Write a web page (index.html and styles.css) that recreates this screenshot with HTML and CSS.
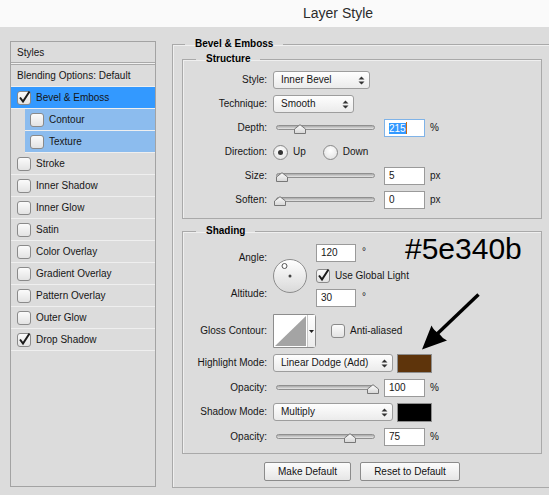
FILE: index.html
```html
<!doctype html>
<html>
<head>
<meta charset="utf-8">
<title>Layer Style</title>
<link rel="stylesheet" href="styles.css">
</head>

<body>
<div class="dialog">
	<div class="titlebar">Layer Style</div>
	<div class="main">
		<div class="styles_list">
			<div class="list_head">Styles</div>
			<div class="list_sep"></div>
			<div class="list_row">Blending Options: Default</div>
			<div class="list_row on"><span class="chk"><svg viewBox="0 0 12 12"><path d="M2 5.5L5 9.5L11.5-0.5"/></svg></span>Bevel &amp; Emboss</div>
			<div class="list_row sub"><span class="chk"></span>Contour</div>
			<div class="list_row sub"><span class="chk"></span>Texture</div>
			<div class="list_row"><span class="chk"></span>Stroke</div>
			<div class="list_row"><span class="chk"></span>Inner Shadow</div>
			<div class="list_row"><span class="chk"></span>Inner Glow</div>
			<div class="list_row"><span class="chk"></span>Satin</div>
			<div class="list_row"><span class="chk"></span>Color Overlay</div>
			<div class="list_row"><span class="chk"></span>Gradient Overlay</div>
			<div class="list_row"><span class="chk"></span>Pattern Overlay</div>
			<div class="list_row"><span class="chk"></span>Outer Glow</div>
			<div class="list_row"><span class="chk"><svg viewBox="0 0 12 12"><path d="M2 5.5L5 9.5L11.5-0.5"/></svg></span>Drop Shadow</div>
		</div>

		<fieldset class="group main_group">
			<legend>Bevel &amp; Emboss</legend>

			<fieldset class="group structure">
				<legend>Structure</legend>
				<div class="frow">
					<span class="lbl">Style:</span>
					<div class="select w96">Inner Bevel<svg class="updown" viewBox="0 0 7 9"><path d="M0.5 3.5L3.5 0.5L6.5 3.5Z M0.5 5.5L3.5 8.5L6.5 5.5Z"/></svg></div>
				</div>
				<div class="frow">
					<span class="lbl">Technique:</span>
					<div class="select w80">Smooth<svg class="updown" viewBox="0 0 7 9"><path d="M0.5 3.5L3.5 0.5L6.5 3.5Z M0.5 5.5L3.5 8.5L6.5 5.5Z"/></svg></div>
				</div>
				<div class="frow">
					<span class="lbl">Depth:</span>
					<div class="slider"><div class="track"></div><div class="rail"><span class="thumb" style="left:21.5%"></span></div></div>
					<span class="field focus"><span class="sel">215</span><span class="caret"></span></span>
					<span class="unit">%</span>
				</div>
				<div class="frow">
					<span class="lbl">Direction:</span>
					<span class="radio on"></span><span class="radio_txt">Up</span>
					<span class="radio"></span><span class="radio_txt">Down</span>
				</div>
				<div class="frow">
					<span class="lbl">Size:</span>
					<div class="slider"><div class="track"></div><div class="rail"><span class="thumb" style="left:2%"></span></div></div>
					<span class="field">5</span>
					<span class="unit">px</span>
				</div>
				<div class="frow">
					<span class="lbl">Soften:</span>
					<div class="slider"><div class="track"></div><div class="rail"><span class="thumb" style="left:0%"></span></div></div>
					<span class="field">0</span>
					<span class="unit">px</span>
				</div>
			</fieldset>

			<fieldset class="group shading">
				<legend>Shading</legend>
				<div class="angle_block">
					<div class="angle_labels">
						<div class="lbl_angle">Angle:</div>
						<div class="lbl_alt">Altitude:</div>
					</div>
					<svg class="dial" width="34" height="34" viewBox="0 0 34 34">
						<defs><linearGradient id="dialg" x1="0" y1="0" x2="0" y2="1"><stop offset="0" stop-color="#ffffff"/><stop offset="1" stop-color="#d9d9d9"/></linearGradient></defs>
						<circle cx="17" cy="17" r="16.5" fill="url(#dialg)" stroke="#8c8c8c"/>
						<circle cx="11.5" cy="7" r="2.5" fill="#fff" stroke="#555"/>
						<circle cx="17" cy="17" r="1.5" fill="#444"/>
					</svg>
					<div class="angle_fields">
						<div class="frow_s"><span class="field w40">120</span><span class="deg">°</span></div>
						<div class="chk_row"><span class="chk"><svg viewBox="0 0 12 12"><path d="M2 5.5L5 9.5L11.5-0.5"/></svg></span>Use Global Light</div>
						<div class="frow_s"><span class="field w40">30</span><span class="deg">°</span></div>
					</div>
				</div>

				<div class="contour_row">
					<span class="lbl">Gloss Contour:</span>
					<div class="contour">
						<svg class="contour_pic" width="33" height="32" viewBox="0 0 33 32"><polygon points="1,31 32,1 32,31" fill="#a4a4a4"/></svg>
						<span class="contour_drop"><svg width="5" height="3" viewBox="0 0 5 3"><path d="M0 0H5L2.5 3Z" fill="#222"/></svg></span>
					</div>
					<span class="chk aa"></span>Anti-aliased
				</div>

				<div class="srow">
					<span class="lbl">Highlight Mode:</span>
					<div class="select w119">Linear Dodge (Add)<svg class="updown" viewBox="0 0 7 9"><path d="M0.5 3.5L3.5 0.5L6.5 3.5Z M0.5 5.5L3.5 8.5L6.5 5.5Z"/></svg></div>
					<span class="swatch" style="background:#5e340b"></span>
				</div>
				<div class="srow">
					<span class="lbl">Opacity:</span>
					<div class="slider"><div class="track"></div><div class="rail"><span class="thumb" style="left:100%"></span></div></div>
					<span class="field">100</span>
					<span class="unit">%</span>
				</div>
				<div class="srow">
					<span class="lbl">Shadow Mode:</span>
					<div class="select w119">Multiply<svg class="updown" viewBox="0 0 7 9"><path d="M0.5 3.5L3.5 0.5L6.5 3.5Z M0.5 5.5L3.5 8.5L6.5 5.5Z"/></svg></div>
					<span class="swatch" style="background:#000000"></span>
				</div>
				<div class="srow">
					<span class="lbl">Opacity:</span>
					<div class="slider"><div class="track"></div><div class="rail"><span class="thumb" style="left:75%"></span></div></div>
					<span class="field">75</span>
					<span class="unit">%</span>
				</div>
			</fieldset>

			<div class="buttons">
				<button class="btn b_make">Make Default</button>
				<button class="btn b_reset">Reset to Default</button>
			</div>
		</fieldset>
	</div>

	<!-- annotation over the dialog -->
	<div class="hex_note">#5e340b</div>
	<svg class="arrow" width="549" height="495" viewBox="0 0 549 495">
		<line x1="478.5" y1="294.5" x2="436" y2="335" stroke="#000" stroke-width="3.4"/>
		<path d="M422 349.5L431.5 325.5Q434 331 439 333.5Q442 338 447 340.5Z" fill="#000"/>
	</svg>
</div>
</body>
</html>
```

FILE: styles.css
```css
*{ padding:0; margin:0;}
html,body{ width:549px; height:495px; overflow:hidden;}
body{ background-color:#dcdcdc; font:10px/12px "Liberation Sans", Arial, sans-serif; color:#161616;}
.dialog{ position:relative; width:549px; height:495px; overflow:hidden;}

.titlebar{ height:27px; line-height:27px; padding-left:303px; background-color:#fafafa; font-size:14px; color:#2b2b2b;}
.main{ display:flex; align-items:flex-start;}

/* left list */
.styles_list{ margin:14px 0 0 10px; width:146px; height:446px; box-sizing:border-box; border:1px solid #a3a3a3; flex:none;}
.list_head{ height:20px; line-height:21px; padding-left:6px;}
.list_sep{ height:1px; background-color:#f1f1f1; border-top:1px solid #a9a9a9; border-bottom:1px solid #a9a9a9;}
.list_row{ display:flex; align-items:center; height:21px; padding-left:6px; border-bottom:1px solid #efefef;}
.list_row.on{ background-color:#3399ff;}
.list_row.sub{ margin-left:14px; padding-left:5px; background-color:#8cbcee;}

.chk{ width:14px; height:14px; box-sizing:border-box; border:1px solid #8a8a8a; border-radius:3px; background:linear-gradient(#fbfbfb,#e3e3e3); margin-right:5px; flex:none;}
.chk svg{ display:block; width:12px; height:12px; overflow:visible;}
.chk path{ fill:none; stroke:#1c1c1c; stroke-width:2;}

/* group boxes */
fieldset.group{ border:1px solid #a9a9a9; min-width:0; box-shadow:inset 1px 1px 0 #efefef;}
fieldset.group legend{ padding:0 10px; margin-left:13px; font-weight:bold; line-height:12px; color:#000;}
.main_group{ margin:11px 0 0 16px; width:400px; padding:3px 0 6px 9px; flex:none;}
.main_group > legend{ margin-left:3px !important;}
.structure{ width:360px; box-sizing:border-box; padding:3px 0 6px 0;}
.shading{ width:360px; box-sizing:border-box; margin-top:6px; padding:4px 0 4px 0;}

.frow{ display:flex; align-items:center; height:24px;}
.srow{ display:flex; align-items:center; height:24.5px;}
.lbl{ width:84px; margin-right:6px; text-align:right; flex:none;}

.select{ display:flex; align-items:center; justify-content:space-between; height:18px; box-sizing:border-box; border:1px solid #9d9d9d; border-radius:3px; background:linear-gradient(#fefefe,#ebebeb); padding:0 4px 0 7px; flex:none;}
.w96{ width:97px;}
.w80{ width:81px;}
.w119{ width:120px;}
.updown{ width:7px; height:9px; fill:#333;}

.field{ display:flex; align-items:center; width:41px; height:18px; box-sizing:border-box; border:1px solid #9a9a9a; background-color:#fff; padding-left:4px; margin-left:9px; flex:none;}
.field.w40{ width:40px; margin-left:0;}
.field.focus{ border-color:#7fb3e8;}
.sel{ background-color:#3399ff; color:#fff; line-height:11px;}
.caret{ width:1px; height:12px; background-color:#c86a10;}
.unit{ margin-left:5px;}

.slider{ width:99px; margin:3px 0 0 3px; flex:none;}
.track{ height:5px; box-sizing:border-box; border:1px solid #8f8f8f; border-radius:3px; background:linear-gradient(#a9a9a9,#e6e6e6);}
.rail{ position:relative; height:10px; margin:-6px 4px 0 2px;}
.thumb{ position:absolute; top:0; width:12px; height:10px; margin-left:-4px; background:url("data:image/svg+xml,%3Csvg xmlns='http://www.w3.org/2000/svg' width='12' height='10'%3E%3Cdefs%3E%3ClinearGradient id='g' x1='0' y1='0' x2='0' y2='1'%3E%3Cstop offset='0' stop-color='%23fdfdfd'/%3E%3Cstop offset='1' stop-color='%23d6d6d6'/%3E%3C/linearGradient%3E%3C/defs%3E%3Cpath d='M0.5 9.5V5L6 0.7L11.5 5V9.5Z' fill='url(%23g)' stroke='%23777'/%3E%3C/svg%3E") no-repeat;}

.radio{ display:flex; align-items:center; justify-content:center; width:15px; height:15px; box-sizing:border-box; border:1px solid #888; border-radius:50%; background:radial-gradient(circle at 50% 35%,#ffffff,#dedede); flex:none;}
.radio.on::after{ content:""; width:5px; height:5px; border-radius:50%; background-color:#333;}
.radio_txt{ margin:0 17px 0 5px;}

/* angle / altitude */
.angle_block{ display:flex; height:66px;}
.angle_labels{ width:84px; margin-right:6px; text-align:right; flex:none;}
.lbl_angle{ margin-top:11px;}
.lbl_alt{ margin-top:24px;}
.dial{ display:block; margin-top:18px; flex:none;}
.angle_fields{ margin-left:9px;}
.frow_s{ display:flex; align-items:center; height:18px; margin-top:3px;}
.frow_s + .chk_row + .frow_s{ margin-top:6px;}
.deg{ margin-left:6px; padding-bottom:3px;}
.chk_row{ display:flex; align-items:center; height:14px; margin-top:7px;}

.contour_row{ display:flex; align-items:center; height:34px; margin:7px 0 3px;}
.contour{ display:flex; height:34px; box-sizing:border-box; border:1px solid #8d8d8d; border-radius:0 3px 3px 0; background-color:#fff; flex:none;}
.contour_pic{ display:block;}
.contour_drop{ display:flex; align-items:center; justify-content:center; width:7px; border-left:1px solid #c8c8c8; background:linear-gradient(#fefefe,#ececec);}
.chk.aa{ margin-left:15px;}

.swatch{ width:35px; height:19px; box-sizing:border-box; border:1px solid #8e8e8e; margin-left:4px; flex:none;}

.buttons{ display:flex; margin-top:8px; padding-left:82px;}
.btn{ height:19px; box-sizing:border-box; border:1px solid #8b8b8b; border-radius:2px; background:linear-gradient(#fcfcfc,#e6e6e6); font:10px "Liberation Sans", Arial, sans-serif; color:#111;}
.b_make{ width:87px;}
.b_reset{ width:100px; margin-left:9px;}

/* annotation */
.hex_note{ position:absolute; left:405px; top:234px; font:30px/30px "Liberation Sans", Arial, sans-serif; color:#000;}
.arrow{ position:absolute; left:0; top:0; pointer-events:none;}
```
